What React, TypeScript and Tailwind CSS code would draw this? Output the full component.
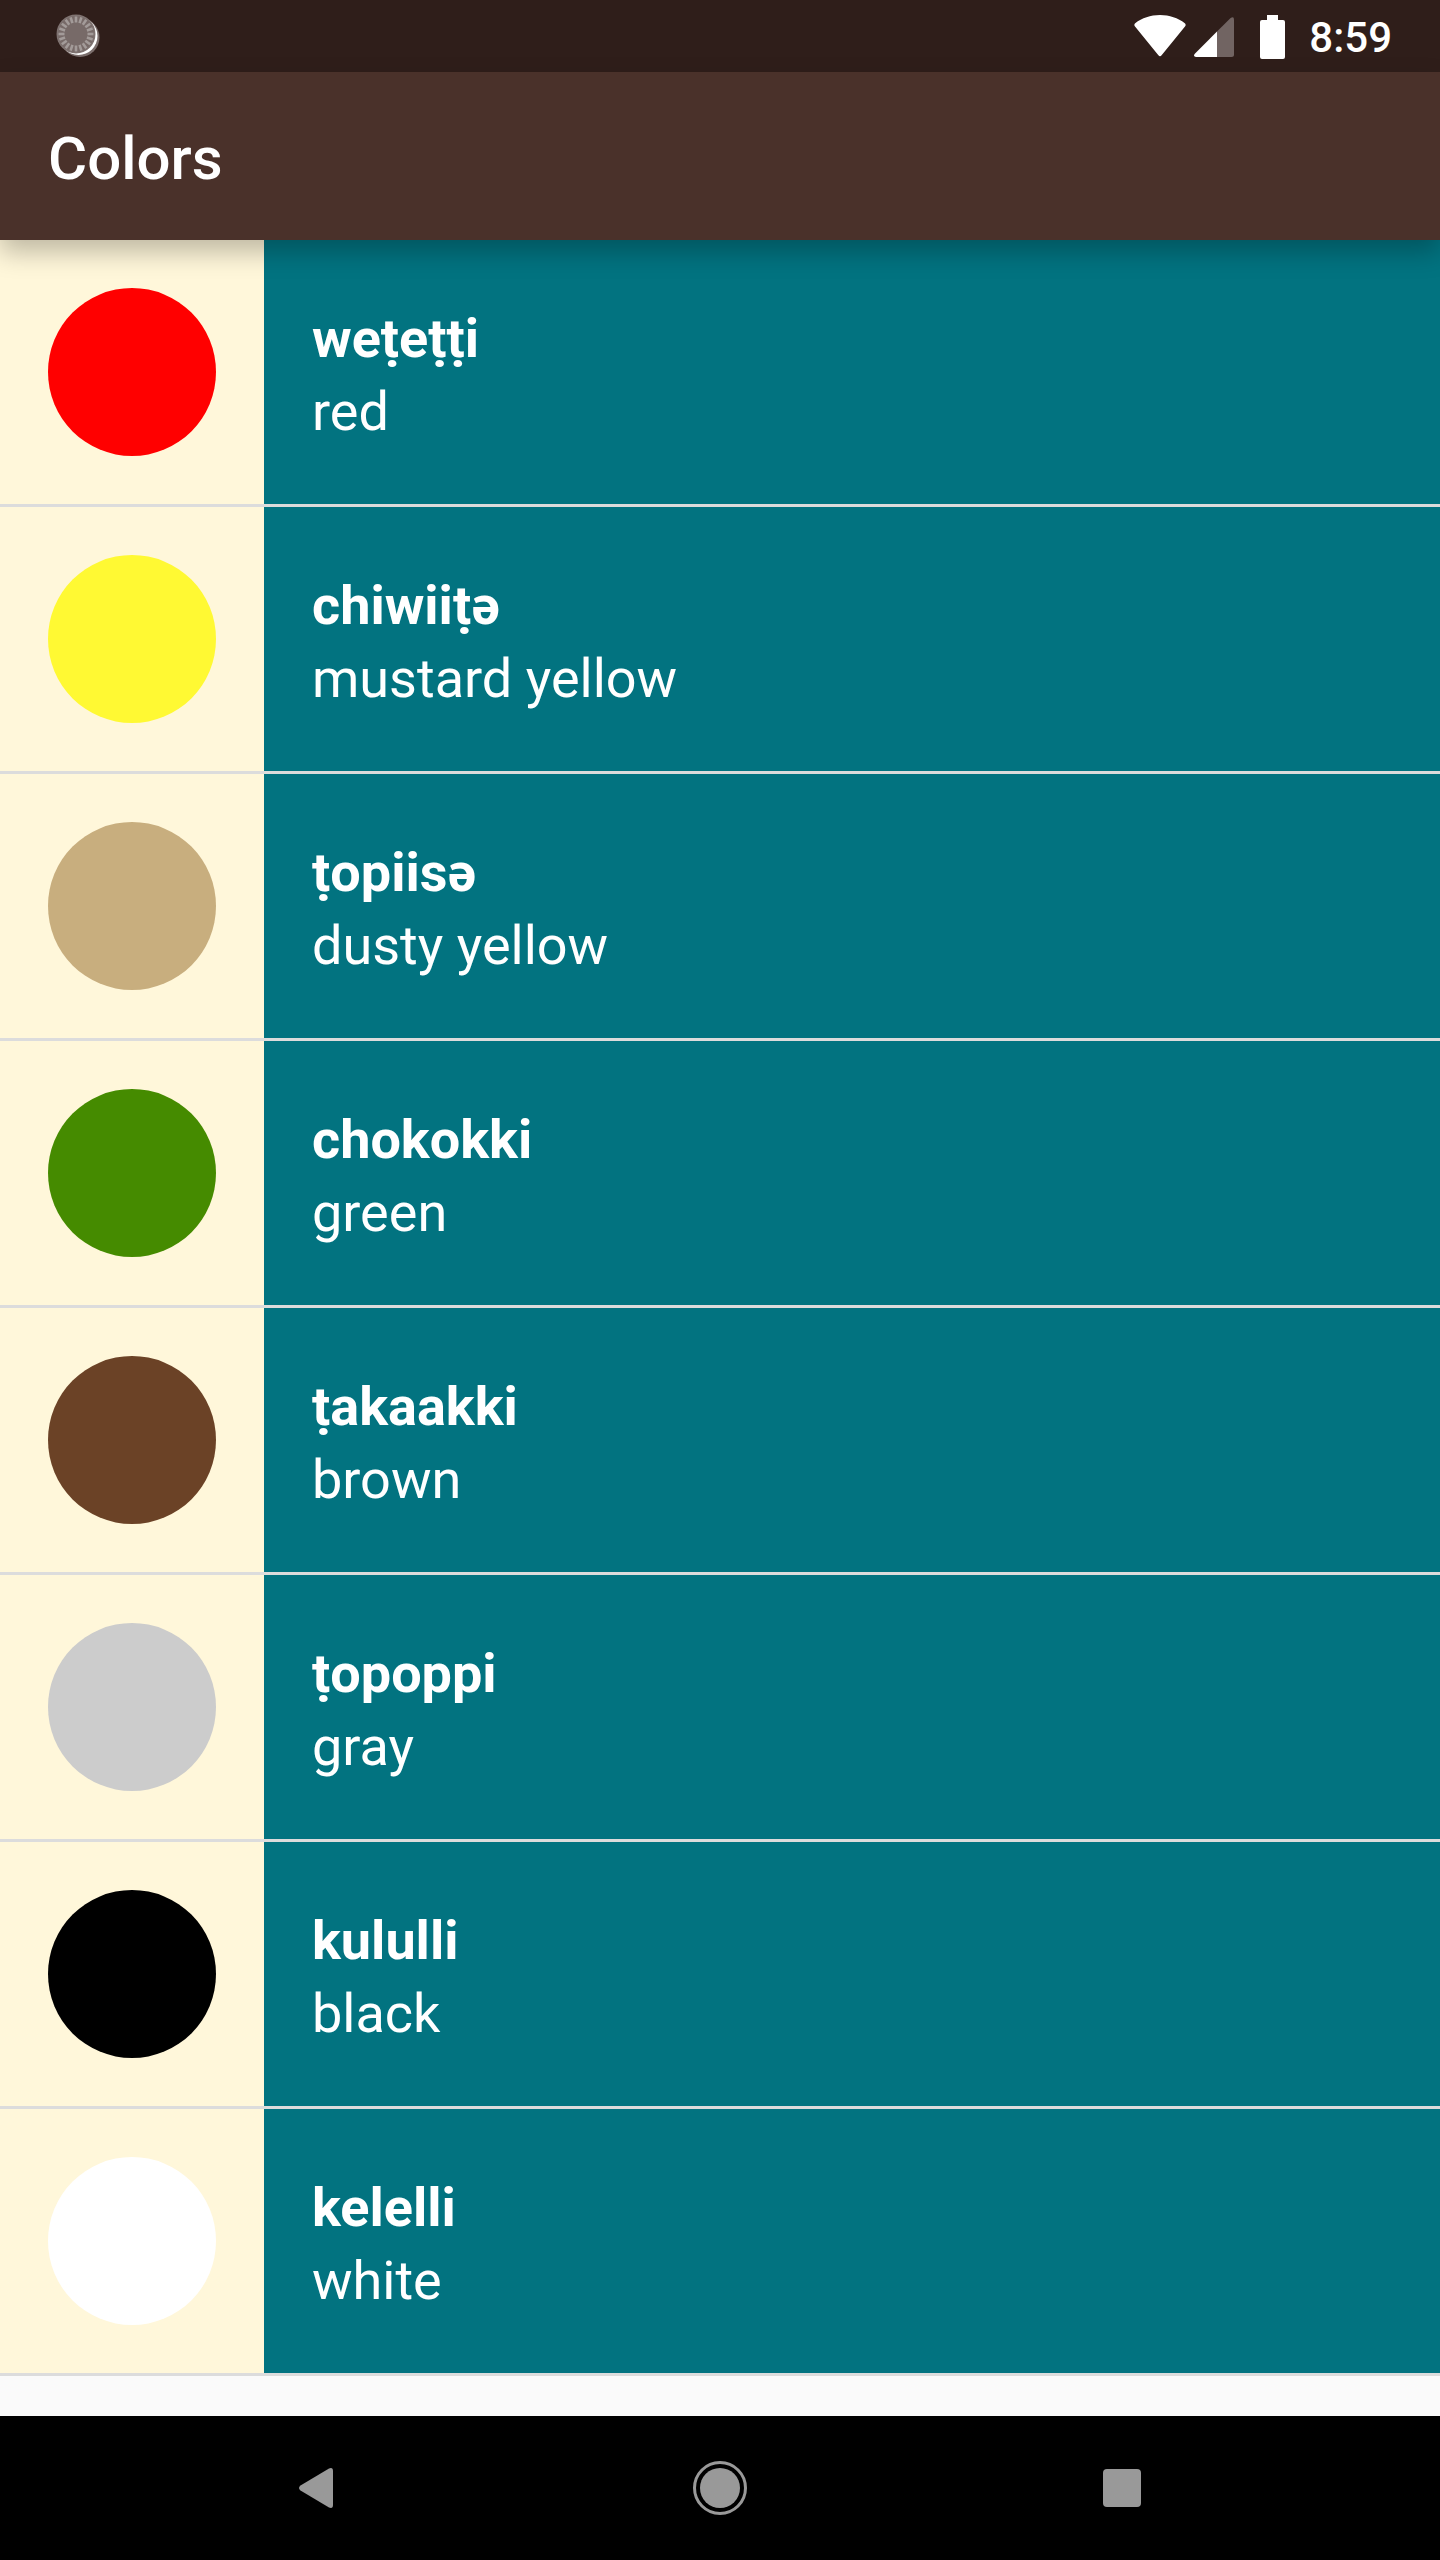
const words = [
  { miwok: "weṭeṭṭi", english: "red", swatch: "bg-[#ff0000]" },
  { miwok: "chiwiiṭə", english: "mustard yellow", swatch: "bg-[#fff933]" },
  { miwok: "ṭopiisə", english: "dusty yellow", swatch: "bg-[#c8ae7e]" },
  { miwok: "chokokki", english: "green", swatch: "bg-[#458b00]" },
  { miwok: "ṭakaakki", english: "brown", swatch: "bg-[#6b4226]" },
  { miwok: "ṭopoppi", english: "gray", swatch: "bg-[#cccccc]" },
  { miwok: "kululli", english: "black", swatch: "bg-[#000000]" },
  { miwok: "kelelli", english: "white", swatch: "bg-[#ffffff]" },
];

const ticks = Array.from({ length: 20 }, (_, i) => i * 18);

function SyncIcon() {
  return (
    <svg width="48" height="48" viewBox="0 0 48 48" aria-hidden="true">
      <circle cx="27" cy="25.500" r="19.500" fill="#7b6e6c" />
      <circle cx="25.500" cy="24" r="19" fill="#ffffff" />
      <circle cx="23" cy="22" r="19.500" fill="#7f7371" />
      <circle cx="23" cy="22" r="18" fill="#776a68" />
      {ticks.map((angle) => (
        <path
          key={angle}
          d="M23 4.500V10.500"
          stroke="#a39b99"
          strokeWidth="2.6"
          transform={`rotate(${angle} 23 22)`}
        />
      ))}
    </svg>
  );
}

function WifiIcon() {
  return (
    <svg width="52" height="44" viewBox="0 0 52 44" fill="#ffffff" aria-hidden="true">
      <path d="M1.200 8.200Q-.4 9.800 1 11.500L24.200 40Q26 42.500 27.800 40L51 11.500Q52.400 9.800 50.800 8.200C44 3 35.500 0 26 0S8 3 1.200 8.200Z" />
    </svg>
  );
}

function SignalIcon() {
  return (
    <svg width="40" height="40" viewBox="0 0 40 40" aria-hidden="true">
      <path d="M23 14.500 36.600.9Q40-1 40 2.500V37.500Q40 40 37.500 40H23Z" fill="#716462" />
      <path d="M23 14.500V40H2Q-1 39.500.6 36.900Z" fill="#ffffff" />
    </svg>
  );
}

function BatteryIcon() {
  return (
    <svg width="25" height="44" viewBox="0 0 25 44" fill="#ffffff" aria-hidden="true">
      <path d="M7 0H18V5H23Q25 5 25 7V42Q25 44 23 44H2Q0 44 0 42V7Q0 5 2 5H7Z" />
    </svg>
  );
}

function StatusBar() {
  return (
    <div className="flex h-[72px] items-center justify-between bg-[#2f1e1a] pr-12 pl-[53px]">
      <SyncIcon />
      <div className="flex items-center pt-0.5">
        <WifiIcon />
        <div className="ml-2">
          <SignalIcon />
        </div>
        <div className="mr-6 ml-[26px]">
          <BatteryIcon />
        </div>
        <time className="pt-0.5 text-[42px] leading-[50px] font-medium">8:59</time>
      </div>
    </div>
  );
}

function NavigationBar() {
  return (
    <nav className="grid h-36 grid-cols-3 items-center justify-items-center bg-black px-[117px]">
      <button type="button" aria-label="Back">
        <svg width="80" height="80" viewBox="0 0 80 80" fill="#999999" aria-hidden="true">
          <path d="M22.500 37.500 51 20.500Q55 19 55 23V57Q55 61 51 59.500L22.500 42.500Q19.500 40 22.500 37.500Z" />
        </svg>
      </button>
      <button type="button" aria-label="Home">
        <svg width="80" height="80" viewBox="0 0 80 80" aria-hidden="true">
          <circle cx="40" cy="40" r="25.500" fill="none" stroke="#999999" strokeWidth="3" />
          <circle cx="40" cy="40" r="20" fill="#999999" />
        </svg>
      </button>
      <button type="button" aria-label="Recent apps">
        <svg width="80" height="80" viewBox="0 0 80 80" aria-hidden="true">
          <rect x="21" y="21" width="38" height="38" rx="4" fill="#999999" />
        </svg>
      </button>
    </nav>
  );
}

export default function App() {
  return (
    <div className="flex min-h-screen flex-col bg-[#fafafa] font-['Roboto',sans-serif] text-white">
      <StatusBar />
      <header className="relative flex h-[168px] items-center bg-[#4a312a] px-12 pt-1.5 shadow-[0_12px_24px_rgba(0,0,0,0.25)]">
        <h1 className="text-[60px] leading-[70px] font-medium">Colors</h1>
      </header>
      <main className="flex-1">
        <ul>
          {words.map((word) => (
            <li key={word.english} className="flex border-b-3 border-[#dcdcdc] bg-[#027380]">
              <div className="shrink-0 bg-[#fff7da] p-12">
                <div className={`size-[168px] rounded-full ${word.swatch}`} />
              </div>
              <div className="flex flex-1 flex-col justify-center px-12 pt-1.5 text-[54px] leading-[73px]">
                <p className="font-bold">{word.miwok}</p>
                <p>{word.english}</p>
              </div>
            </li>
          ))}
        </ul>
      </main>
      <NavigationBar />
    </div>
  );
}
